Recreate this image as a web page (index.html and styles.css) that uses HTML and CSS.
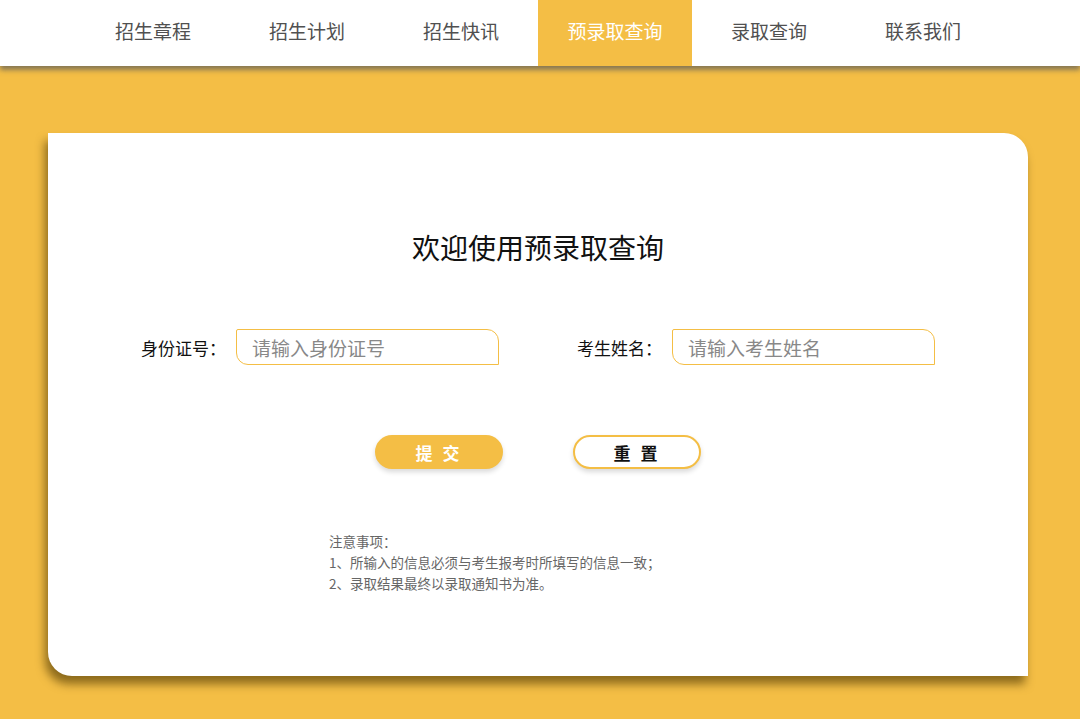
FILE: index.html
```html
<!DOCTYPE html>
<html lang="zh-CN">
<head>
    <meta charset="UTF-8">
    <meta name="viewport" content="width=device-width, initial-scale=1.0">
    <title>预录取查询</title>
    <link rel="stylesheet" href="styles.css">
</head>
<body>
    <div class="nav">
        <ul class="navList">
            <li><a href="javascript:;">招生章程</a></li>
            <li><a href="javascript:;">招生计划</a></li>
            <li><a href="javascript:;">招生快讯</a></li>
            <li class="active"><a href="javascript:;">预录取查询</a></li>
            <li><a href="javascript:;">录取查询</a></li>
            <li><a href="javascript:;">联系我们</a></li>
        </ul>
    </div>

    <div class="main">
        <div class="card">
            <h1 class="title">欢迎使用预录取查询</h1>
            <div class="formRow">
                <div class="field">
                    <label>身份证号：</label>
                    <input type="text" placeholder="请输入身份证号">
                </div>
                <div class="field">
                    <label>考生姓名：</label>
                    <input type="text" placeholder="请输入考生姓名">
                </div>
            </div>
            <div class="btnRow">
                <button class="btn submit">提&nbsp;交</button>
                <button class="btn reset">重&nbsp;置</button>
            </div>
            <div class="notes">
                <p>注意事项：</p>
                <p>1、所输入的信息必须与考生报考时所填写的信息一致；</p>
                <p>2、录取结果最终以录取通知书为准。</p>
            </div>
        </div>
    </div>
</body>
</html>
```

FILE: styles.css
```css
*{
    margin: 0;
    padding: 0;
    list-style-type: none;
    box-sizing: border-box;
}
a{
    text-decoration: none;
}
body{
    font-family: "Noto Sans CJK SC", "Noto Sans", sans-serif;
    background-color: #f4be45;
    height: 719px;
    overflow: hidden;
}
.nav{
    position: relative;
    z-index: 2;
    height: 66px;
    background-color: #fff;
    box-shadow: 0 4px 5px rgba(90, 90, 90, 0.7);
}
.navList{
    display: flex;
    justify-content: center;
    padding-right: 4px;
}
.navList li{
    width: 154px;
    height: 66px;
}
.navList a{
    display: block;
    height: 66px;
    line-height: 62px;
    text-align: center;
    font-size: 19px;
    color: #505050;
}
.navList .active{
    background-color: #f4be45;
}
.navList .active a{
    color: #fff;
}
.main{
    padding: 67px 52px 0 48px;
}
.card{
    height: 543px;
    background-color: #fff;
    border-radius: 0 24px 0 24px;
    box-shadow: -3px 8px 10px rgba(70, 50, 0, 0.6);
    padding-top: 94px;
}
.title{
    font-size: 28px;
    font-weight: normal;
    line-height: 40px;
    text-align: center;
    color: #111;
}
.formRow{
    display: flex;
    justify-content: center;
    gap: 78px;
    margin-top: 62px;
}
.field{
    display: flex;
    align-items: center;
}
.field label{
    width: 95px;
    font-size: 17px;
    color: #111;
}
.field input{
    width: 263px;
    height: 36px;
    border: 1px solid #f4be45;
    border-radius: 2px 12px 0 12px;
    padding-left: 15px;
    font-family: inherit;
    font-size: 19px;
    outline: none;
}
.field input::placeholder{
    color: #888;
}
.btnRow{
    display: flex;
    justify-content: center;
    gap: 70px;
    margin-top: 70px;
}
.btn{
    width: 128px;
    height: 34px;
    border-radius: 17px;
    font-family: inherit;
    font-size: 17px;
    font-weight: bold;
    letter-spacing: 3px;
    cursor: pointer;
    box-shadow: 0 3px 5px rgba(0, 0, 0, 0.15);
}
.submit{
    background-color: #f4be45;
    color: #fff;
    border: 2px solid #f4be45;
}
.reset{
    background-color: #fff;
    color: #111;
    border: 2px solid #f4be45;
}
.notes{
    margin-top: 62px;
    padding-left: 281px;
    font-size: 13.5px;
    line-height: 21px;
    color: #666;
}
```
